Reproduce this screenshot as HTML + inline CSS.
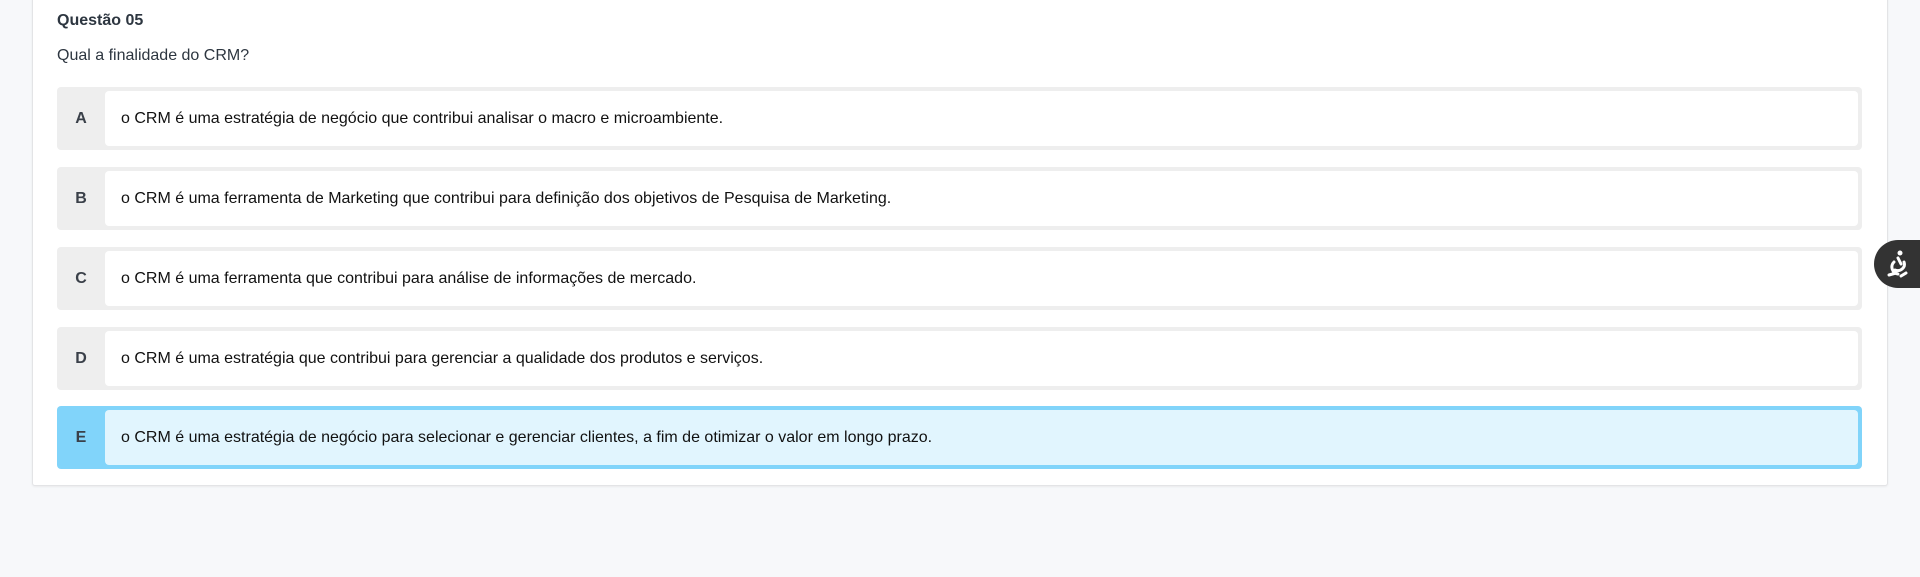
<!DOCTYPE html>
<html><head><meta charset="utf-8"><style>
*{box-sizing:border-box;margin:0;padding:0}
body{width:1920px;height:577px;background:#f7f8fa;font-family:"Liberation Sans",sans-serif;color:#222;position:relative;overflow:hidden}
.card{position:absolute;left:32px;top:-4px;width:1856px;height:490px;background:#fff;border:1px solid #e3e4e6;border-radius:3px;box-shadow:0 1px 2px rgba(0,0,0,.06)}
.t{position:absolute;left:57px;top:12px;font-size:16px;font-weight:bold;color:#2d3640}
.q{position:absolute;left:57px;top:47px;font-size:16px;color:#2d3640}
.opt{position:absolute;left:57px;width:1805px;height:63px;background:#eeeeee;border-radius:4px}
.opt .l{position:absolute;left:0;top:0;width:48px;height:100%;display:flex;align-items:center;justify-content:center;font-weight:bold;font-size:16px;color:#3a4049}
.opt .b{position:absolute;left:48px;top:4px;right:4px;bottom:4px;background:#fff;border-radius:4px;display:flex;align-items:center;padding-left:16px;font-size:16px;color:#111}
.sel{background:#81d4fa}
.sel .b{background:#e1f5fe}
.acc{position:absolute;left:1874px;top:240px;width:50px;height:48px;background:#333;border-radius:24px 0 0 24px}
</style></head><body>
<div class="card"></div>
<div class="t">Questão 05</div>
<div class="q">Qual a finalidade do CRM?</div>
<div class="opt" style="top:87px"><div class="l">A</div><div class="b">o CRM é uma estratégia de negócio que contribui analisar o macro e microambiente.</div></div>
<div class="opt" style="top:167px"><div class="l">B</div><div class="b">o CRM é uma ferramenta de Marketing que contribui para definição dos objetivos de Pesquisa de Marketing.</div></div>
<div class="opt" style="top:247px"><div class="l">C</div><div class="b">o CRM é uma ferramenta que contribui para análise de informações de mercado.</div></div>
<div class="opt" style="top:327px"><div class="l">D</div><div class="b">o CRM é uma estratégia que contribui para gerenciar a qualidade dos produtos e serviços.</div></div>
<div class="opt sel" style="top:406px"><div class="l">E</div><div class="b">o CRM é uma estratégia de negócio para selecionar e gerenciar clientes, a fim de otimizar o valor em longo prazo.</div></div>
<div class="acc"><svg width="46" height="48" viewBox="0 0 46 48"><circle cx="26" cy="13" r="2.5" fill="#fff"/><path d="M24 18 L27 24 M30 22 C32 28 26 32 21 30 M20 22 C16 26 18 33 24 34 M15 35 L22 33 M27 36 L32 33" stroke="#fff" stroke-width="3" fill="none" stroke-linecap="round"/></svg></div>
</body></html>
